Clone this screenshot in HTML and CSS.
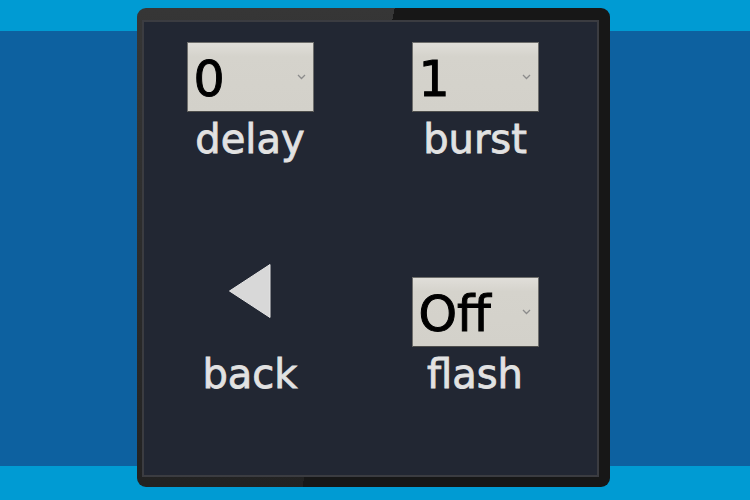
FILE: index.html
```html
<!DOCTYPE html>
<html>
<head>
<meta charset="utf-8">
<link rel="stylesheet" href="styles.css">
</head>
<body>
<div class="device">
  <div class="screen">
    <div class="grid">
      <div class="cell">
        <div class="select"><span class="value">0</span><svg class="chev" width="9" height="6" viewBox="0 0 9 6"><path d="M1 1 L4.5 4.5 L8 1" fill="none" stroke="#8c8c8c" stroke-width="1.3"/></svg></div>
        <div class="label">delay</div>
      </div>
      <div class="cell">
        <div class="select"><span class="value">1</span><svg class="chev" width="9" height="6" viewBox="0 0 9 6"><path d="M1 1 L4.5 4.5 L8 1" fill="none" stroke="#8c8c8c" stroke-width="1.3"/></svg></div>
        <div class="label">burst</div>
      </div>
      <div class="cell">
        <svg class="back" width="42" height="54" viewBox="0 0 42 54"><polygon points="41,0.5 41,53.5 0.5,27" fill="#d8d8d8" stroke="#e6e6e6" stroke-width="1"/></svg>
        <div class="label back-label">back</div>
      </div>
      <div class="cell">
        <div class="select"><span class="value">Off</span><svg class="chev" width="9" height="6" viewBox="0 0 9 6"><path d="M1 1 L4.5 4.5 L8 1" fill="none" stroke="#8c8c8c" stroke-width="1.3"/></svg></div>
        <div class="label">flash</div>
      </div>
    </div>
  </div>
</div>
</body>
</html>
```
FILE: styles.css
```css
html, body {
  margin: 0;
  padding: 0;
}
body {
  width: 750px;
  height: 500px;
  overflow: hidden;
  background: linear-gradient(to bottom, #009bd3 0, #009bd3 31px, #0d61a0 31px, #0d61a0 466px, #009bd3 466px, #009bd3 500px);
  padding: 8px 0 0 137px;
  box-sizing: border-box;
  font-family: "DejaVu Sans", sans-serif;
}
.device {
  width: 473px;
  height: 479px;
  box-sizing: border-box;
  border-radius: 9px;
  padding: 12px 11px 10px 5px;
  background:
    linear-gradient(100.9deg, transparent 253px, #171717 253px),
    linear-gradient(to bottom, #363636, #222222);
}
.screen {
  width: 100%;
  height: 100%;
  box-sizing: border-box;
  border: 2px solid #3b3c41;
  background: #222733;
}
.grid {
  display: grid;
  grid-template-columns: 210px 210px;
  column-gap: 15px;
  row-gap: 105px;
  align-items: end;
  padding: 20px 0 0 1px;
}
.cell {
  display: flex;
  flex-direction: column;
  align-items: center;
}
.select {
  width: 127px;
  height: 70px;
  box-sizing: border-box;
  display: flex;
  align-items: center;
  justify-content: space-between;
  padding: 0 7px 0 6px;
  border: 1px solid #6e6e6c;
  border-bottom-color: #4e4e4c;
  background: linear-gradient(to bottom, #e0ded9, #d5d3cc 20%, #d3d1ca);
}
.value {
  font-size: 49px;
  line-height: 56px;
  padding-top: 6px;
  color: #000;
  -webkit-text-stroke: 1px #000;
}
.chev {
  display: block;
}
.label {
  margin-top: 7px;
  font-size: 40px;
  line-height: 40px;
  color: #e2e2e2;
  -webkit-text-stroke: 0.8px #e2e2e2;
}
.back {
  display: block;
}
.back-label {
  margin-top: 36px;
}
```
